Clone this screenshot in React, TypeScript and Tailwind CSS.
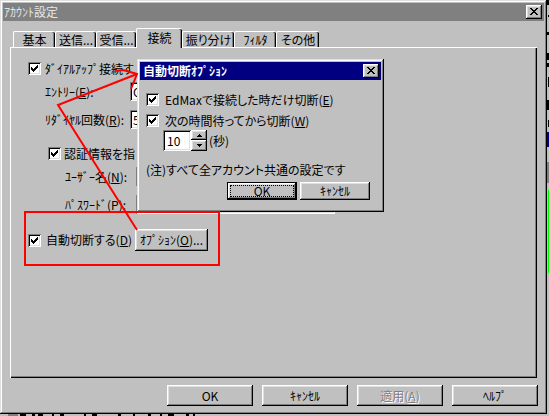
import React from 'react';

const raised = 'shadow-[inset_-1px_-1px_0_#000,inset_1px_1px_0_#fff,inset_-2px_-2px_0_#808080,inset_2px_2px_0_#dfdfdf]';
const sunken = 'shadow-[inset_1px_1px_0_#808080,inset_-1px_-1px_0_#fff,inset_2px_2px_0_#000,inset_-2px_-2px_0_#dfdfdf]';
const frame = 'shadow-[inset_-1px_-1px_0_#000,inset_1px_1px_0_#dfdfdf,inset_-2px_-2px_0_#808080,inset_2px_2px_0_#fff]';

const tabs = [
  { label: '基本', w: 'w-[42px]' },
  { label: '送信...', w: 'w-[41px]' },
  { label: '受信...', w: 'w-[40px]' },
  { label: '接続', w: 'w-[46px]', active: true },
  { label: '振り分け', w: 'w-[52px]' },
  { label: 'ﾌｨﾙﾀ', w: 'w-[42px]' },
  { label: 'その他', w: 'w-[43px]' },
];

const Check: React.FC = () => (
  <span className={`relative inline-block w-[13px] h-[13px] shrink-0 bg-white ${sunken}`}>
    <svg className="absolute left-[3px] top-[3px]" width="7" height="7" viewBox="0 0 7 7" shapeRendering="crispEdges">
      <path d="M0 2h1v3H0z M1 3h1v3H1z M2 4h1v3H2z M3 3h1v3H3z M4 2h1v3H4z M5 1h1v3H5z M6 0h1v3H6z" fill="#000" />
    </svg>
  </span>
);

const CloseBox: React.FC = () => (
  <span className={`relative inline-block w-[16px] h-[14px] shrink-0 bg-[#c0c0c0] ${raised}`}>
    <svg className="absolute left-[4px] top-[3px]" width="8" height="7" viewBox="0 0 8 7" shapeRendering="crispEdges">
      <path
        d="M0 0h2v1H0z M6 0h2v1H6z M1 1h2v1H1z M5 1h2v1H5z M2 2h4v1H2z M3 3h2v1H3z M2 4h4v1H2z M1 5h2v1H1z M5 5h2v1H5z M0 6h2v1H0z M6 6h2v1H6z"
        fill="#000"
      />
    </svg>
  </span>
);

const Btn: React.FC<{ className?: string; children: React.ReactNode }> = ({ className = '', children }) => (
  <div className={`flex items-center justify-center bg-[#c0c0c0] leading-none ${raised} ${className}`}>{children}</div>
);

const Field: React.FC<{ className?: string; children?: React.ReactNode }> = ({ className = '', children }) => (
  <div className={`h-[19px] bg-white pl-[3px] flex items-center overflow-hidden ${sunken} ${className}`}>{children}</div>
);

const Arrow: React.FC<{ up?: boolean }> = ({ up }) => (
  <svg width="5" height="3" viewBox="0 0 5 3" shapeRendering="crispEdges">
    <path d={up ? 'M2 0h1v1H2z M1 1h3v1H1z M0 2h5v1H0z' : 'M0 0h5v1H0z M1 1h3v1H1z M2 2h1v1H2z'} fill="#000" />
  </svg>
);

const App: React.FC = () => {
  return (
    <div className="relative w-[549px] h-[416px] overflow-hidden bg-[#c0c0c0] font-['Noto_Sans_CJK_JP',sans-serif] text-[12px] leading-[14px] text-black [font-feature-settings:'palt']">
      {/* desktop scraps behind the dialog */}
      <svg className="absolute left-[547px] top-0" width="2" height="416" shapeRendering="crispEdges">
        <rect x="0" y="0" width="2" height="5" fill="#000" />
        <rect x="1" y="15" width="1" height="2" fill="#000" />
        <rect x="0" y="32" width="2" height="3" fill="#000" />
        <rect x="0" y="53" width="2" height="7" fill="#000" />
        <rect x="0" y="63" width="2" height="4" fill="#000" />
        <rect x="1" y="77" width="1" height="10" fill="#000" />
        <rect x="0" y="100" width="2" height="10" fill="#000" />
        <rect x="1" y="120" width="1" height="7" fill="#000" />
        <rect x="0" y="132" width="2" height="15" fill="#000080" />
        <rect x="0" y="162" width="2" height="21" fill="#808080" />
        <rect x="1" y="190" width="1" height="83" fill="#00ff00" />
      </svg>
      <svg className="absolute left-0 top-[414px]" width="549" height="2" shapeRendering="crispEdges">
        <rect x="8" y="0" width="10" height="2" fill="#808080" />
        <rect x="20" y="0" width="6" height="2" fill="#000" />
        <rect x="32" y="0" width="3" height="2" fill="#000" />
        <rect x="38" y="0" width="5" height="2" fill="#000" />
        <rect x="52" y="0" width="2" height="2" fill="#000" />
        <rect x="60" y="0" width="4" height="2" fill="#000" />
        <rect x="84" y="0" width="2" height="2" fill="#000" />
        <rect x="92" y="0" width="5" height="2" fill="#000" />
        <rect x="118" y="0" width="3" height="2" fill="#000" />
        <rect x="133" y="0" width="2" height="2" fill="#000" />
        <rect x="148" y="0" width="3" height="2" fill="#000" />
        <rect x="160" y="0" width="2" height="2" fill="#000" />
        <rect x="168" y="0" width="6" height="2" fill="#000" />
        <rect x="186" y="0" width="3" height="2" fill="#000" />
        <rect x="193" y="0" width="2" height="2" fill="#000" />
      </svg>

      {/* Main dialog */}
      <div className={`absolute left-0 top-0 w-[547px] h-[414px] bg-[#c0c0c0] p-[3px] flex flex-col ${frame}`}>
        <div className="h-[18px] bg-[#808080] flex items-center justify-between pl-[1px] pr-[2px]">
          <span className="text-[#e6e6e6]">ｱｶｳﾝﾄ設定</span>
          <CloseBox />
        </div>

        <div className="flex flex-col pl-[7px] pt-[7px]">
          {/* Tabs */}
          <div className="flex items-end h-[19px] pl-[3px]">
            {tabs.map(t =>
              t.active ? (
                <div
                  key={t.label}
                  className={`${t.w} h-[20px] -mb-[1px] relative z-10 bg-[#c0c0c0] border-t border-l border-white rounded-tl-[2px] rounded-tr-[2px] shadow-[inset_-1px_0_0_#000,inset_-2px_0_0_#808080] flex justify-center pt-[2px]`}
                >
                  {t.label}
                </div>
              ) : (
                <div
                  key={t.label}
                  className={`${t.w} h-[16px] border-t border-l border-white rounded-tl-[2px] rounded-tr-[2px] shadow-[inset_-1px_0_0_#000,inset_-2px_0_0_#808080] flex items-center justify-center whitespace-nowrap`}
                >
                  {t.label}
                </div>
              )
            )}
          </div>

          {/* Panel: its right half lies under the options window */}
          <div className="relative w-[527px] h-[331px] shadow-[inset_1px_1px_0_#fff,inset_-1px_-1px_0_#000,inset_-2px_-2px_0_#808080] pt-[15px] pl-[18px] flex flex-col whitespace-nowrap">
            <div className="h-[13px] flex items-center">
              <Check />
              <span className="ml-[4px] w-[92px] overflow-hidden">ﾀﾞｲｱﾙｱｯﾌﾟ接続す</span>
            </div>
            <div className="mt-[7px] h-[19px] flex items-center pl-[17px]">
              <span className="w-[85px]">ｴﾝﾄﾘｰ(<u>E</u>):</span>
              <Field className="w-[205px]">
                <span className="w-[4px] overflow-hidden">C</span>
              </Field>
            </div>
            <div className="mt-[9px] h-[19px] flex items-center pl-[17px]">
              <span className="w-[85px]">ﾘﾀﾞｲﾔﾙ回数(<u>R</u>):</span>
              <Field className="w-[40px]">
                <span className="w-[4px] overflow-hidden">5</span>
              </Field>
            </div>
            <div className="mt-[18px] h-[13px] flex items-center pl-[20px]">
              <Check />
              <span className="ml-[3px] w-[73px] overflow-hidden">認証情報を指</span>
            </div>
            <div className="mt-[7px] h-[19px] flex items-center pl-[37px]">
              <span className="w-[71px]">ﾕｰｻﾞｰ名(<u>N</u>):</span>
              <Field className="w-[199px]" />
            </div>
            <div className="mt-[9px] h-[19px] flex items-center pl-[37px]">
              <span className="w-[71px]">ﾊﾟｽﾜｰﾄﾞ(<u>P</u>):</span>
              <Field className="w-[199px]" />
            </div>
            <div className="mt-[15px] h-[22px] flex items-center">
              <Check />
              <span className="ml-[5px] w-[89px]">自動切断する(<u>D</u>)</span>
              <Btn className="w-[73px] h-[22px]">
                ｵﾌﾟｼｮﾝ(<u>O</u>)...
              </Btn>
            </div>
          </div>

          {/* Dialog buttons */}
          <div className="mt-[7px] flex gap-[9px] pl-[157px]">
            <Btn className="w-[86px] h-[21px]">OK</Btn>
            <Btn className="w-[86px] h-[21px]">ｷｬﾝｾﾙ</Btn>
            <Btn className="w-[86px] h-[21px] text-[#808080] [text-shadow:1px_1px_0_#fff]">
              適用(<u>A</u>)
            </Btn>
            <Btn className="w-[86px] h-[21px]">ﾍﾙﾌﾟ</Btn>
          </div>
        </div>
      </div>

      {/* Auto-disconnect options window */}
      <div className={`absolute left-[137px] top-[59px] z-20 w-[247px] h-[153px] bg-[#c0c0c0] p-[3px] flex flex-col whitespace-nowrap ${frame}`}>
        <div className="h-[18px] bg-[#000080] flex items-center justify-between pl-[3px] pr-[2px]">
          <span className="text-white font-bold">自動切断ｵﾌﾟｼｮﾝ</span>
          <CloseBox />
        </div>
        <div className="flex flex-col pl-[6px]">
          <div className="mt-[13px] h-[13px] flex items-center">
            <Check />
            <span className="ml-[6px]">EdMaxで接続した時だけ切断(<u>E</u>)</span>
          </div>
          <div className="mt-[8px] h-[13px] flex items-center">
            <Check />
            <span className="ml-[6px]">次の時間待ってから切断(<u>W</u>)</span>
          </div>
          <div className="mt-[3px] h-[21px] flex items-center pl-[17px]">
            <div className={`w-[28px] h-[21px] bg-white pl-[4px] flex items-center ${sunken}`}>10</div>
            <div className="w-[16px] h-[21px] flex flex-col">
              <div className={`h-[10px] flex items-center justify-center bg-[#c0c0c0] ${raised}`}>
                <Arrow up />
              </div>
              <div className={`h-[11px] flex items-center justify-center bg-[#c0c0c0] ${raised}`}>
                <Arrow />
              </div>
            </div>
            <span className="ml-[2px]">(秒)</span>
          </div>
          <div className="mt-[12px] h-[14px] flex items-center">(注)すべて全アカウント共通の設定です</div>
          <div className="mt-[5px] flex justify-end gap-[3px] pr-[11px]">
            <div className="w-[70px] h-[18px] border border-black flex">
              <div className={`flex-1 flex p-[2px] ${raised}`}>
                <span className="flex-1 flex items-center justify-center leading-none border border-dotted border-black">OK</span>
              </div>
            </div>
            <Btn className="w-[70px] h-[18px]">ｷｬﾝｾﾙ</Btn>
          </div>
        </div>
      </div>

      {/* red annotation */}
      <svg className="absolute left-0 top-0 z-30 pointer-events-none" width="549" height="416">
        <rect x="25" y="212" width="194" height="53" fill="none" stroke="#ff0000" strokeWidth="2" />
        <polyline points="137,230 58,105 137,74" fill="none" stroke="#ff0000" strokeWidth="2" />
        <polyline points="115,71 123,70 137,74 131,89" fill="none" stroke="#ff0000" strokeWidth="2" />
      </svg>
    </div>
  );
};

export default App;
